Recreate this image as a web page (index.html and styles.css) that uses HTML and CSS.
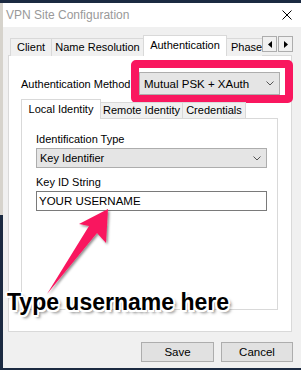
FILE: index.html
```html
<!DOCTYPE html>
<html lang="en">
<head>
    <meta charset="UTF-8">
    <title>VPN Site Configuration</title>
    <link rel="stylesheet" href="styles.css">
</head>
<body>
    <div class="window">
        <div class="titlebar">
            <span class="title">VPN Site Configuration</span>
            <svg class="close" viewBox="0 0 10 10">
                <path d="M0.5 0.5L9.5 9.5M9.5 0.5L0.5 9.5" stroke="#000" stroke-width="1" fill="none" />
            </svg>
        </div>

        <div class="content">
            <div class="tabstrip">
                <div class="tabs">
                    <div class="tab tab-client">Client</div>
                    <div class="tab tab-name">Name Resolution</div>
                    <div class="tab tab-auth active">Authentication</div>
                    <div class="tab tab-phase">Phase</div>
                </div>
                <div class="tab-scroll">
                    <span class="scroll-btn">
                        <svg viewBox="0 0 4 7"><path d="M4 0L0 3.5L4 7z" fill="#000" /></svg>
                    </span>
                    <span class="scroll-btn">
                        <svg viewBox="0 0 4 7"><path d="M0 0L4 3.5L0 7z" fill="#000" /></svg>
                    </span>
                </div>
            </div>

            <div class="panel">
                <div class="method-row">
                    <span class="label">Authentication Method</span>
                    <div class="combo combo-method">
                        <span>Mutual PSK + XAuth</span>
                        <svg class="chevron" viewBox="0 0 8 5"><path d="M0.5 0.5L4 4L7.5 0.5" stroke="#555" fill="none" /></svg>
                    </div>
                </div>

                <div class="subtabs">
                    <div class="subtab tab-local active">Local Identity</div>
                    <div class="subtab tab-remote">Remote Identity</div>
                    <div class="subtab tab-cred">Credentials</div>
                </div>

                <div class="subpanel">
                    <span class="label field-label">Identification Type</span>
                    <div class="combo combo-type">
                        <span>Key Identifier</span>
                        <svg class="chevron" viewBox="0 0 8 5"><path d="M0.5 0.5L4 4L7.5 0.5" stroke="#555" fill="none" /></svg>
                    </div>
                    <span class="label field-label key-label">Key ID String</span>
                    <div class="textbox">YOUR USERNAME</div>
                </div>
            </div>

            <div class="buttons">
                <button class="btn btn-save">Save</button>
                <button class="btn btn-cancel">Cancel</button>
            </div>
        </div>
    </div>

    <!-- annotation layer -->
    <div class="highlight"></div>
    <svg class="arrow" viewBox="0 0 301 370">
        <defs>
            <filter id="shadow" x="-20%" y="-20%" width="140%" height="140%">
                <feDropShadow dx="1.5" dy="1.5" stdDeviation="1.2" flood-color="#000" flood-opacity="0.45" />
            </filter>
        </defs>
        <polygon points="108,209 106,243 97,233 47,294 89,226 79,224" fill="#f9175f" filter="url(#shadow)" />
    </svg>
    <div class="callout">Type username here</div>
</body>
</html>
```

FILE: styles.css
```css
:root {
    --clr-navy: #1b2a41;
    --clr-face: #f0f0f0;
    --clr-tab-border: #d9d9d9;
    --clr-ctrl-border: #adadad;
    --clr-pink: #f9175f;
}

* {
    margin: 0;
    padding: 0;
    box-sizing: border-box;
}

body {
    width: 301px;
    height: 370px;
    overflow: hidden;
    position: relative;
    font-family: 'Liberation Sans', Arial, sans-serif;
    font-size: 11px;
    color: #000;
    background: linear-gradient(to bottom, var(--clr-navy) 3px, #d6d3cc 3px, #d6d3cc 215px, var(--clr-navy) 215px);
}

.window {
    margin: 3px 0 0 3px;
    width: 298px;
    height: 365px;
    background: var(--clr-face);
    display: flex;
    flex-direction: column;
}

.titlebar {
    height: 24px;
    background: #fff;
    display: flex;
    align-items: center;
    justify-content: space-between;
    padding: 0 9px 0 3px;
}

.title {
    font-size: 12px;
    color: #999;
}

.close {
    width: 10px;
    height: 10px;
}

.content {
    flex: 1;
    padding: 8px 9px 0 5px;
}

/* main tabs */
.tabstrip {
    display: flex;
    align-items: flex-end;
    height: 20px;
    position: relative;
    z-index: 1;
}

.tabs {
    flex: 1;
    display: flex;
    align-items: flex-end;
    overflow: hidden;
    padding-left: 2px;
    height: 21px;
    align-self: flex-start;
}

.tab {
    height: 18px;
    flex: none;
    border: 1px solid var(--clr-tab-border);
    border-bottom: none;
    margin-right: -1px;
    background: var(--clr-face);
    line-height: 17px;
    text-align: center;
}

.tab.active {
    height: 21px;
    background: #fff;
    position: relative;
    z-index: 2;
    line-height: 19px;
}

.tab-client { width: 42px; }
.tab-name { width: 93px; }
.tab-auth { width: 84px; }
.tab-phase { width: 50px; text-align: left; padding-left: 4px; }

.tab-scroll {
    display: flex;
    gap: 1px;
    margin: 0 -1px 3px 0;
    align-self: flex-end;
}

.scroll-btn {
    width: 15px;
    height: 16px;
    border: 1px solid var(--clr-ctrl-border);
    background: var(--clr-face);
    display: flex;
    align-items: center;
    justify-content: center;
}

.scroll-btn svg {
    width: 4px;
    height: 7px;
}

.panel {
    height: 277px;
    background: #fff;
    border: 1px solid var(--clr-tab-border);
    padding: 16px 11px 0 12px;
}

.method-row {
    display: flex;
    align-items: center;
    justify-content: space-between;
}

.combo {
    display: flex;
    align-items: center;
    justify-content: space-between;
    background: #e5e5e5;
    border: 1px solid var(--clr-ctrl-border);
    padding: 0 5px 0 4px;
}

.combo-method {
    width: 141px;
    height: 23px;
    font-size: 11.5px;
}

.chevron {
    width: 8px;
    height: 5px;
}

/* identity tabs */
.subtabs {
    display: flex;
    align-items: flex-end;
    height: 19px;
    margin-top: 4px;
    position: relative;
    z-index: 1;
}

.subtab {
    height: 16px;
    border: 1px solid var(--clr-tab-border);
    border-bottom: none;
    margin-right: -1px;
    background: var(--clr-face);
    line-height: 15px;
    text-align: center;
}

.subtab.active {
    height: 20px;
    margin-bottom: -1px;
    background: #fff;
    line-height: 18px;
}

.tab-local { width: 80px; }
.tab-remote { width: 83px; }
.tab-cred { width: 64px; }

.subpanel {
    width: 257px;
    height: 192px;
    border: 1px solid var(--clr-tab-border);
    padding: 14px 10px 0 14px;
    display: flex;
    flex-direction: column;
}

.field-label {
    line-height: 13px;
    margin-bottom: 2px;
}

.key-label {
    margin-top: 8px;
}

.combo-type {
    height: 20px;
    padding-left: 3px;
}

.textbox {
    height: 20px;
    border: 1px solid #7a7a7a;
    background: #fff;
    padding-left: 2px;
    line-height: 18px;
    font-size: 11.5px;
}

.buttons {
    display: flex;
    justify-content: flex-end;
    gap: 7px;
    margin: 10px -1px 0 0;
}

.btn {
    height: 20px;
    border: 1px solid var(--clr-ctrl-border);
    background: #e1e1e1;
    font-family: inherit;
    font-size: 11.5px;
    color: #000;
}

.btn-save { width: 73px; }
.btn-cancel { width: 72px; }

/* annotations drawn over the screenshot */
.highlight {
    position: absolute;
    left: 131px;
    top: 60px;
    width: 162px;
    height: 43px;
    border: 8px solid var(--clr-pink);
    border-radius: 5px;
}

.arrow {
    position: absolute;
    left: 0;
    top: 0;
    width: 301px;
    height: 370px;
}

.callout {
    position: absolute;
    left: 7px;
    top: 291px;
    font-size: 23px;
    line-height: 23px;
    font-weight: bold;
    color: #000;
    text-shadow:
        -1.5px -1.5px 0 #fff, 1.5px -1.5px 0 #fff, -1.5px 1.5px 0 #fff, 1.5px 1.5px 0 #fff,
        0 -2px 0 #fff, 0 2px 0 #fff, -2px 0 0 #fff, 2px 0 0 #fff,
        3px 3px 3px rgba(0, 0, 0, 0.5);
}
```
